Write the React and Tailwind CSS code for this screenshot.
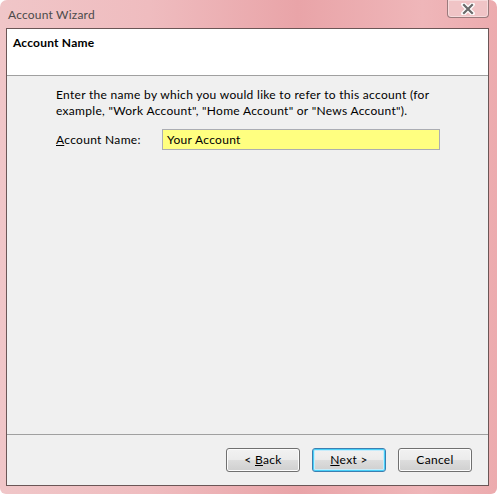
import React from "react";

function Btn({ children, def }) {
  return (
    <button
      className={
        "w-[74px] h-[24px] rounded-[3px] border text-[12px] tracking-[0.3px] leading-none text-black " +
        (def
          ? "border-[#3c7fb1] shadow-[inset_0_0_0_1px_#48d0f8,inset_0_0_0_2px_#c6ecfb]"
          : "border-[#707070] shadow-[inset_0_0_0_1px_#fcfcfc]")
      }
      style={{
        background: "linear-gradient(#f2f2f2 0%, #ebebeb 50%, #dddddd 50%, #cfcfcf 100%)",
      }}
    >
      {children}
    </button>
  );
}

export default function App() {
  return (
    <div
      className="w-[497px] h-[494px] flex flex-col pl-[6px] pr-[8px] pb-[8px] rounded-t-[7px] rounded-b-[6px] relative"
      style={{
        fontFamily: "Lato, 'Liberation Sans', sans-serif",
        background:
          "linear-gradient(90deg, #f0c6c8 0%, #efbcbf 30%, #e9a4a8 60%, #efb6b9 85%, #ecabae 100%)",
      }}
    >
      <div className="h-[28px] flex items-center pl-[2px] pt-[1px] text-[12px] tracking-[0.2px] text-[#4b4b4b]">
        Account Wizard
      </div>
      <div className="absolute left-[447px] top-0 w-[42px] h-[18px] rounded-b-[4px] border border-t-0 border-[#9a7a7c] bg-[#f0c4c6] shadow-[inset_0_0_0_1px_#f6dadb] flex items-center justify-center">
        <svg width="16" height="12" viewBox="0 0 16 12">
          <path d="M3.5 1.5 L12.5 10.5 M12.5 1.5 L3.5 10.5" stroke="#ffffff" strokeWidth="4.6" strokeLinecap="round" />
          <path d="M4 2 L12 10 M12 2 L4 10" stroke="#6a6a6a" strokeWidth="2.2" strokeLinecap="square" />
        </svg>
      </div>
      <div className="flex-1 flex flex-col border border-[#6b5656] bg-[#f0f0f0]">
        <div className="h-[47px] bg-white border-b border-[#a0a0a0] pl-[6px] pt-[6px] text-[12px] tracking-[0.2px] leading-[16px] font-bold text-black">
          Account Name
        </div>
        <div className="flex-1 flex flex-col pl-[49px] pt-[11px] text-[12px] tracking-[0.3px] text-black">
          <p className="leading-[16px] w-[400px]">
            Enter the name by which you would like to refer to this account (for
            <br />
            example, "Work Account", "Home Account" or "News Account").
          </p>
          <div className="flex items-center mt-[10px]">
            <span className="w-[106px]">
              <u>A</u>ccount Name:
            </span>
            <div className="w-[278px] h-[21px] border border-[#abadb3] bg-[#ffff80] flex items-center pl-[4px]">
              Your Account
            </div>
          </div>
        </div>
        <div className="h-[51px] border-t border-[#a0a0a0] flex items-start justify-end pt-[13px] pr-[16px] gap-[12px]">
          <Btn>
            &lt; <u>B</u>ack
          </Btn>
          <Btn def>
            <u>N</u>ext &gt;
          </Btn>
          <Btn>Cancel</Btn>
        </div>
      </div>
    </div>
  );
}
